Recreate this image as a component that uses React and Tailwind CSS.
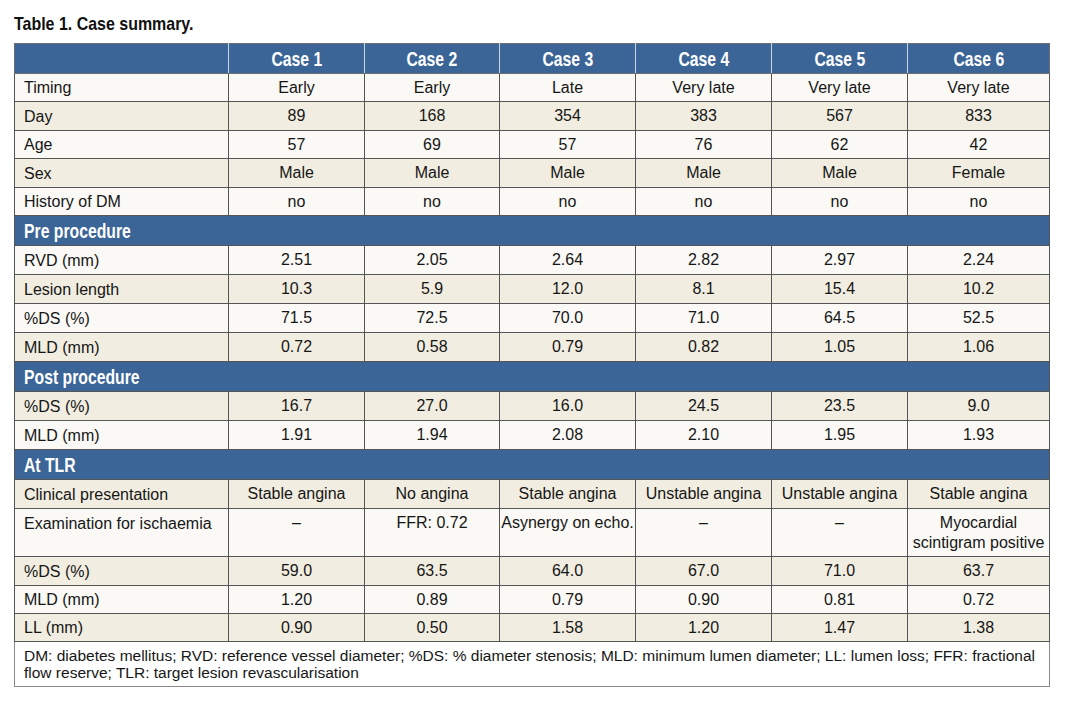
import React from "react";

const cases = ["Case 1", "Case 2", "Case 3", "Case 4", "Case 5", "Case 6"];

// [label, values, beige, rowHeightClass, tall]
const sections = [
  {
    title: null,
    rows: [
      ["Timing", ["Early", "Early", "Late", "Very late", "Very late", "Very late"], false, "h-[28px]"],
      ["Day", ["89", "168", "354", "383", "567", "833"], true, "h-[29px]"],
      ["Age", ["57", "69", "57", "76", "62", "42"], false, "h-[28px]"],
      ["Sex", ["Male", "Male", "Male", "Male", "Male", "Female"], true, "h-[29px]"],
      ["History of DM", ["no", "no", "no", "no", "no", "no"], false, "h-[28px]"],
    ],
  },
  {
    title: "Pre procedure",
    rows: [
      ["RVD (mm)", ["2.51", "2.05", "2.64", "2.82", "2.97", "2.24"], false, "h-[29px]"],
      ["Lesion length", ["10.3", "5.9", "12.0", "8.1", "15.4", "10.2"], true, "h-[29px]"],
      ["%DS (%)", ["71.5", "72.5", "70.0", "71.0", "64.5", "52.5"], false, "h-[29px]"],
      ["MLD (mm)", ["0.72", "0.58", "0.79", "0.82", "1.05", "1.06"], true, "h-[29px]"],
    ],
  },
  {
    title: "Post procedure",
    rows: [
      ["%DS (%)", ["16.7", "27.0", "16.0", "24.5", "23.5", "9.0"], true, "h-[29px]"],
      ["MLD (mm)", ["1.91", "1.94", "2.08", "2.10", "1.95", "1.93"], false, "h-[29px]"],
    ],
  },
  {
    title: "At TLR",
    rows: [
      ["Clinical presentation", ["Stable angina", "No angina", "Stable angina", "Unstable angina", "Unstable angina", "Stable angina"], true, "h-[29px]"],
      ["Examination for ischaemia", ["–", "FFR: 0.72", "Asynergy on echo.", "–", "–", "Myocardial scintigram positive"], false, "h-[48px]", true],
      ["%DS (%)", ["59.0", "63.5", "64.0", "67.0", "71.0", "63.7"], true, "h-[29px]"],
      ["MLD (mm)", ["1.20", "0.89", "0.79", "0.90", "0.81", "0.72"], false, "h-[28px]"],
      ["LL (mm)", ["0.90", "0.50", "1.58", "1.20", "1.47", "1.38"], true, "h-[28px]"],
    ],
  },
];

// condensed bold look: Liberation Sans Bold squeezed horizontally
const Narrow = ({ children, center }) => (
  <span
    className={`inline-block whitespace-nowrap font-bold scale-x-[0.75] ${center ? "origin-center" : "origin-left"}`}
  >
    {children}
  </span>
);

export default function App() {
  return (
    <div className="bg-white w-[1065px] h-[701px] pl-[14px] pt-[13px]" style={{ fontFamily: '"Liberation Sans", Arial, sans-serif' }}>
      <h1 className="text-[19px] font-bold text-[#111] leading-[22px] mb-[8px]">
        <span className="inline-block scale-x-[0.84] origin-left whitespace-nowrap">Table 1. Case summary.</span>
      </h1>
      <table className="table-fixed border-collapse w-[1035px] text-[16px] text-[#161616]">
        <colgroup>
          <col className="w-[214px]" />
          <col className="w-[136px]" />
          <col className="w-[135px]" />
          <col className="w-[136px]" />
          <col className="w-[136px]" />
          <col className="w-[136px]" />
          <col className="w-[142px]" />
        </colgroup>
        <thead>
          <tr className="h-[30px] bg-[#3b6597] text-white">
            <th className="border border-[#6f6f6f] border-r-[#c9d6e6]"></th>
            {cases.map((c, i) => (
              <th
                key={c}
                className={`border border-[#6f6f6f] ${i < 5 ? "border-r-[#c9d6e6]" : ""} text-[21px] leading-[24px] pt-[1px]`}
              >
                <Narrow center>{c}</Narrow>
              </th>
            ))}
          </tr>
        </thead>
        <tbody>
          {sections.map((s, si) => (
            <React.Fragment key={si}>
              {s.title && (
                <tr className="h-[30px] bg-[#3b6597] text-white">
                  <td colSpan={7} className="border border-[#555] px-[9px] text-[21px] leading-[24px]">
                    <Narrow>{s.title}</Narrow>
                  </td>
                </tr>
              )}
              {s.rows.map(([label, vals, beige, h, tall]) => (
                <tr key={label + si} className={`${h} ${beige ? "bg-[#f1ede0]" : "bg-[#faf9f5]"}`}>
                  <td className={`border border-[#555] px-[9px] leading-[19px] whitespace-nowrap ${tall ? "align-top pt-[5px]" : ""}`}>{label}</td>
                  {vals.map((v, i) => (
                    <td key={i} className={`border border-[#555] text-center px-[1px] leading-[20px] ${tall ? "align-top pt-[4px]" : ""}`}>
                      {v}
                    </td>
                  ))}
                </tr>
              ))}
            </React.Fragment>
          ))}
          <tr className="bg-white">
            <td colSpan={7} className="border border-[#8a8a8a] px-[9px] pt-[5px] pb-[5px] text-[15.5px] leading-[17px] text-[#161616]">
              DM: diabetes mellitus; RVD: reference vessel diameter; %DS: % diameter stenosis; MLD: minimum lumen diameter; LL: lumen loss; FFR: fractional flow reserve; TLR: target lesion revascularisation
            </td>
          </tr>
        </tbody>
      </table>
    </div>
  );
}
